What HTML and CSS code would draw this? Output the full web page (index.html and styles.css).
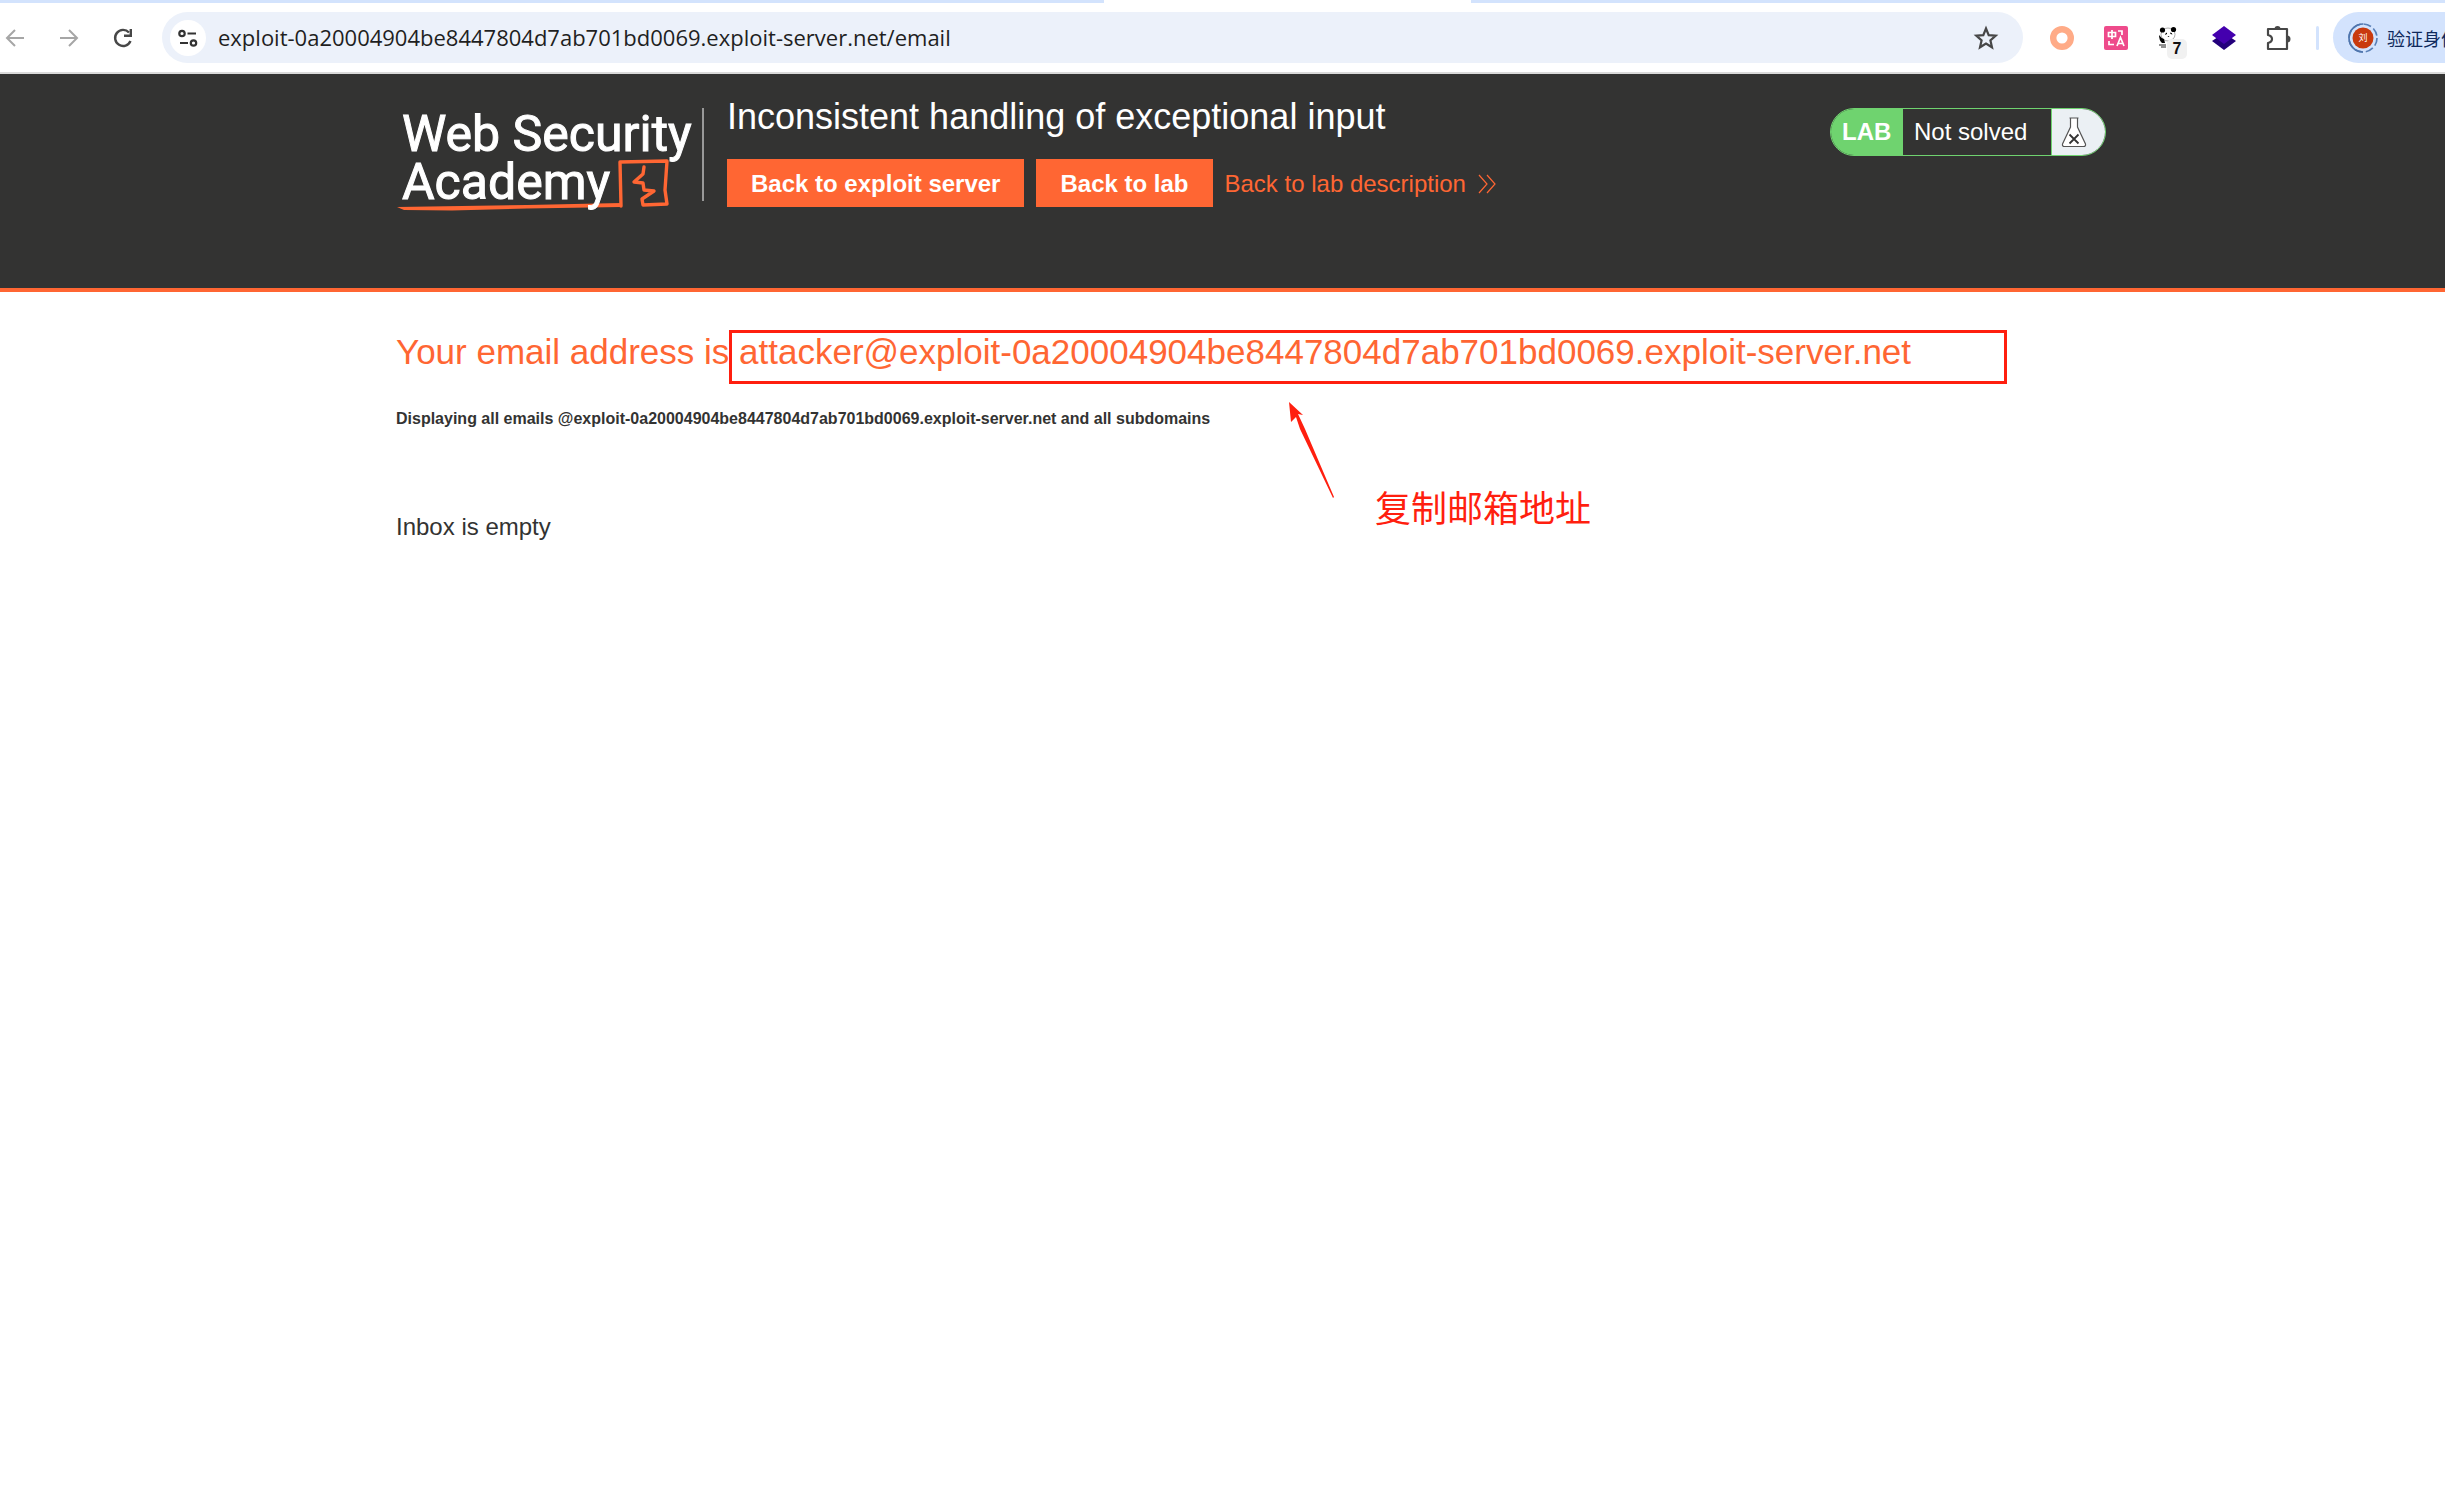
FILE: index.html
```html
<!DOCTYPE html>
<html lang="en">
<head>
<meta charset="utf-8">
<title>Inconsistent handling of exceptional input</title>
<link rel="stylesheet" href="styles.css">
</head>
<body>
<div class="browser">
  <div class="tabstrip"><div class="tab-active"></div></div>
  <div class="toolbar">
    <button class="tool" aria-label="Back"><svg viewBox="0 0 24 24"><path d="M21 12H4M12 4l-8 8 8 8" fill="none" stroke="#a6a6a6" stroke-width="2"/></svg></button>
    <button class="tool" aria-label="Forward"><svg viewBox="0 0 24 24"><path d="M3 12h17M12 4l8 8-8 8" fill="none" stroke="#a6a6a6" stroke-width="2"/></svg></button>
    <button class="tool" aria-label="Reload"><svg viewBox="0 0 24 24"><path d="M19.500 15A8 8 0 1 1 18 6.500" fill="none" stroke="#474747" stroke-width="2.400"/><path d="M21 3v8h-8V8.600h5.600V3z" fill="#474747"/></svg></button>
    <div class="omnibox">
      <button class="site-info" aria-label="Site information"><svg viewBox="0 0 36 36"><g fill="none" stroke="#333" stroke-width="2.200"><circle cx="12" cy="13.500" r="2.700"/><path d="M17.500 13.500H26M10 23h8"/><circle cx="23.500" cy="23" r="2.700"/></g></svg></button>
      <input class="url" type="text" aria-label="Address" value="exploit-0a20004904be8447804d7ab701bd0069.exploit-server.net/email">
      <button class="tool" aria-label="Bookmark"><svg viewBox="0 0 24 24"><path d="M12 2.500l2.700 6.600 7 .6-5.300 4.600 1.600 7L12 17.500l-6 3.800 1.600-7L2.300 9.700l7-.6z" fill="none" stroke="#474747" stroke-width="2.200"/></svg></button>
    </div>
    <button class="tool" aria-label="Recorder"><svg viewBox="0 0 24 24"><circle cx="12" cy="12" r="8.800" fill="#fff" stroke="#ffab87" stroke-width="6.400"/></svg></button>
    <button class="tool" aria-label="Translate"><svg viewBox="0 0 24 24"><rect width="24" height="24" rx="2" fill="#ee4b8b"/><g fill="none" stroke="#fff" stroke-width="1.700"><path d="M4.500 6.500h7v4h-7zM8 4v9M14 5h4v4M5 15v3.500h5M13 20l3.500-8.500L20 20M14 17.500h5"/></g></svg></button>
    <button class="tool" aria-label="Panda, 7 items"><svg viewBox="0 0 24 24"><ellipse cx="10" cy="8.500" rx="7" ry="6.500" fill="#fff" stroke="#888" stroke-width=".7"/><circle cx="4.500" cy="4" r="2.600"/><circle cx="15.500" cy="3.500" r="2.600"/><path d="M1 9q2 3 5 4l1 4H4q-3-3-3-8zM7 9q0-2 2-2.500V8zM12 6.500q2 0 2.500 2L12.500 8zM9.500 10h2l-1 1z"/><path d="M1 19h7M3 21h5" stroke="#222" stroke-width="1"/></svg><span class="badge">7</span></button>
    <button class="tool" aria-label="Layers"><svg viewBox="0 0 24 24"><path d="M0 15L12 7l12 8-12 9z" fill="#23007b"/><path d="M0 9L12 0l12 9-12 9z" fill="#4400ae"/></svg></button>
    <button class="tool" aria-label="Extensions"><svg viewBox="0 0 24 24"><path d="M2 3h19v20H2v-6q4-1 4-4t-4-4z" fill="none" stroke="#474747" stroke-width="2.200" stroke-linejoin="round"/><path d="M8.500 3a3 3 0 0 1 6 0zM21 9.500a3.500 3.500 0 0 1 0 7z" fill="#474747"/></svg></button>
    <div class="divider"></div>
    <button class="profile"><svg class="avatar" viewBox="0 0 30 30"><circle cx="15" cy="15" r="14" fill="none" stroke="#5a80b7" stroke-width="1.700" stroke-dasharray="8 3"/><path d="M15 1a14 14 0 0 0 0 28" fill="none" stroke="#4f75ad" stroke-width="1.700"/><circle cx="15" cy="15" r="10.500" fill="#c93a0e"/><text x="15" y="18" text-anchor="middle" class="initial">刘</text></svg><span>验证身份</span></button>
  </div>
</div>
<header class="lab-header">
  <a class="logo" href="#" aria-label="Web Security Academy">
    <svg viewBox="0 0 308 112">
      <path d="M225 106L224 62L271 61L269 90L271 104L247 105L246 99L258 91L248 90L247 83L238 82L247 74L248 67" fill="none" stroke="#ff6633" stroke-width="3.400" stroke-linejoin="round" stroke-linecap="round"/>
      <path d="M1 107l130-2 94-2v4l-94 1.500-75 2-48-.5z" fill="#ff6633"/>
      <g class="logo-text"><text x="6" y="51">Web Security</text><text x="6" y="99">Academy</text></g>
      <path d="M307 8v93" stroke="#fff" stroke-width="1"/>
    </svg>
  </a>
  <div class="title-block">
    <h2>Inconsistent handling of exceptional input</h2>
    <div class="actions">
      <a class="btn" href="#">Back to exploit server</a>
      <a class="btn" href="#">Back to lab</a>
      <a class="back" href="#">Back to lab description <svg viewBox="0 0 18 20"><path d="M1 1l8 9-8 9M9 1l8 9-8 9" fill="none" stroke="#ff6633" stroke-width="1.200"/></svg></a>
    </div>
  </div>
  <div class="status">
    <span class="status-label">LAB</span>
    <p>Not solved</p>
    <span class="flask"><svg viewBox="0 0 26 32"><path d="M8.500 2h9M9.500 2v9L1.500 28q-.5 2.500 2 2.500h19q2.500 0 2-2.500l-8-17V2" fill="#fff" stroke="#555" stroke-width="1.200"/><path d="M8.500 18.500l9 9M17.500 18.500l-9 9" stroke="#333" stroke-width="1.800"/></svg></span>
  </div>
</header>
<main>
  <h1>Your email address is attacker@exploit-0a20004904be8447804d7ab701bd0069.exploit-server.net</h1>
  <h6>Displaying all emails @exploit-0a20004904be8447804d7ab701bd0069.exploit-server.net and all subdomains</h6>
  <p class="inbox">Inbox is empty</p>
  <div class="mark-box"></div>
  <svg class="mark-arrow" viewBox="0 0 48 98"><path d="M1 0l14 13-5-1 7 15 29 68-1 1L12 27 8 15l-5 5z" fill="#ff1f0f"/></svg>
  <div class="mark-note" lang="zh">复制邮箱地址</div>
</main>
</body>
</html>
```
FILE: styles.css
```css
* { box-sizing: border-box; }
body {
  margin: 0;
  background: #fff;
  color: #333332;
  font-family: "Liberation Sans", Arial, sans-serif;
  font-size: 24px;
  line-height: 28px;
  overflow-x: hidden;
}
h1, h2, h6, p { margin: 0; font-weight: 400; }
button { border: 0; padding: 0; background: none; font: inherit; }
svg { display: block; width: 100%; height: 100%; overflow: visible; }

/* browser bar */
.tabstrip { height: 3px; background: #d3e3fd; padding-left: 1104px; }
.tab-active { width: 367px; height: 3px; background: #fff; }
.toolbar {
  display: flex;
  align-items: center;
  gap: 30px;
  height: 71px;
  padding-left: 3px;
  border-bottom: 2px solid #dadada;
  overflow: hidden;
}
.tool { position: relative; flex: none; width: 24px; height: 24px; }
.omnibox {
  flex: 1;
  display: flex;
  align-items: center;
  height: 51px;
  margin: 0 -3px;
  padding: 0 25px 0 8px;
  border-radius: 26px;
  background: #ecf1fa;
}
.site-info { flex: none; width: 36px; height: 36px; border-radius: 50%; background: #fff; }
.url {
  flex: 1;
  min-width: 0;
  height: 36px;
  margin: 0;
  padding: 0 12px 2px;
  border: 0;
  background: none;
  color: #1f1f1f;
  font: 22px "Open Sans", "Noto Sans", sans-serif;
}
.badge {
  position: absolute;
  left: 9px;
  top: 13px;
  width: 20px;
  height: 20px;
  border-radius: 5px;
  background: #f1f1f1;
  color: #111;
  font-size: 16px;
  font-weight: 700;
  line-height: 20px;
  text-align: center;
}
.divider { flex: none; width: 3px; height: 24px; margin: 0 -16px 0 -4px; border-radius: 2px; background: #d3e3fd; }
.profile {
  flex: none;
  display: flex;
  align-items: center;
  gap: 9px;
  width: 112px;
  height: 51px;
  padding-left: 15px;
  border-radius: 26px 0 0 26px;
  background: #d3e3fd;
  color: #0f2a5c;
  font: 18px "Noto Sans CJK SC", sans-serif;
  white-space: nowrap;
  overflow: hidden;
}
.avatar { flex: none; width: 30px; height: 30px; }
.initial { font: 9px "Noto Sans CJK SC", sans-serif; fill: #fff; }

/* lab header */
.lab-header {
  display: flex;
  align-items: flex-start;
  height: 218px;
  padding: 22px 339px 0 396px;
  border-bottom: 4px solid #ff6633;
  background: #333332;
  color: #fff;
}
.logo { flex: none; width: 308px; height: 112px; margin-top: 4px; }
.logo-text { font: 50px "Roboto", sans-serif; fill: #fff; stroke: #fff; stroke-width: 1px; }
.title-block { flex: 1; margin-left: 23px; }
h2 { font-size: 36px; line-height: 42px; }
.actions { display: flex; gap: 12px; margin-top: 21px; }
.btn {
  height: 48px;
  padding: 0 24px;
  background: #ff6633;
  color: #fff;
  font-weight: 700;
  line-height: 50px;
  text-decoration: none;
}
.back { display: flex; align-items: center; gap: 12px; color: #ff6633; line-height: 50px; text-decoration: none; }
.back svg { width: 18px; height: 20px; }
.status {
  flex: none;
  display: flex;
  width: 276px;
  height: 48px;
  margin-top: 12px;
  border: 1px solid #6fd36f;
  border-radius: 24px;
  overflow: hidden;
  line-height: 46px;
}
.status-label { width: 72px; padding-left: 11px; background: #6fd36f; font-weight: 700; }
.status p { flex: 1; padding-left: 11px; }
.flask { width: 54px; padding: 7px 18px 7px 9px; border-left: 1px solid #6fd36f; background: #ebf0f4; }

/* mailbox */
main { position: relative; padding: 39px 339px 0 396px; }
h1 { color: #ff6633; font-size: 35px; line-height: 42px; }
h6 { margin-top: 37px; font-size: 16px; font-weight: 700; line-height: 18px; }
.inbox { margin-top: 85px; }

/* annotations laid over the page */
.mark-box { position: absolute; left: 729px; top: 38px; width: 1278px; height: 54px; border: 3px solid #ff1f0f; }
.mark-arrow { position: absolute; left: 1288px; top: 110px; width: 48px; height: 98px; }
.mark-note {
  position: absolute;
  left: 1375px;
  top: 192px;
  color: #ff1f0f;
  font: 36px/44px "Noto Sans CJK SC", sans-serif;
}
```
